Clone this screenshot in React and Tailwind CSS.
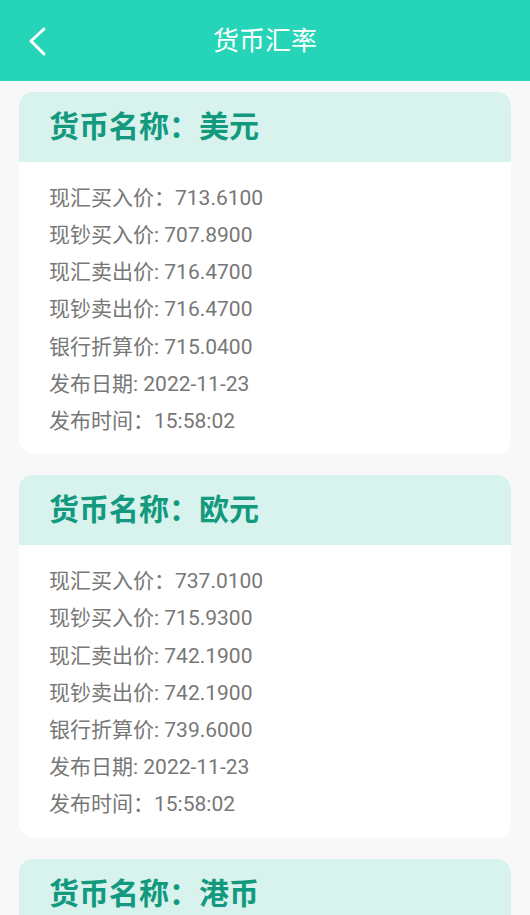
const rates = [
  {
    name: '美元',
    rows: [
      ['现汇买入价：', '713.6100'],
      ['现钞买入价:', ' 707.8900'],
      ['现汇卖出价:', ' 716.4700'],
      ['现钞卖出价:', ' 716.4700'],
      ['银行折算价:', ' 715.0400'],
      ['发布日期:', ' 2022-11-23'],
      ['发布时间：', '15:58:02'],
    ],
  },
  {
    name: '欧元',
    rows: [
      ['现汇买入价：', '737.0100'],
      ['现钞买入价:', ' 715.9300'],
      ['现汇卖出价:', ' 742.1900'],
      ['现钞卖出价:', ' 742.1900'],
      ['银行折算价:', ' 739.6000'],
      ['发布日期:', ' 2022-11-23'],
      ['发布时间：', '15:58:02'],
    ],
  },
  {
    name: '港币',
    rows: [
      ['现汇买入价：', '91.1700'],
      ['现钞买入价:', ' 90.4500'],
      ['现汇卖出价:', ' 91.5300'],
      ['现钞卖出价:', ' 91.5300'],
      ['银行折算价:', ' 91.3500'],
      ['发布日期:', ' 2022-11-23'],
      ['发布时间：', '15:58:02'],
    ],
  },
]

function RateCard({ name, rows }) {
  return (
    <div className="rounded-[14px] overflow-hidden bg-white">
      <div className="h-[70px] bg-[#d8f2ed] flex items-center pl-[30px]">
        <h2 className="text-[30px] font-semibold text-[#12997e] leading-none">货币名称：{name}</h2>
      </div>
      <div className="pl-[30px] pt-[18px] pb-[14px]">
        {rows.map(([k, v]) => (
          <p key={k} className="h-[37.2px] flex items-center text-[21px] text-[#777] whitespace-pre">
            {k}{v}
          </p>
        ))}
      </div>
    </div>
  )
}

export default function App() {
  return (
    <div className="min-h-screen bg-[#f8f8f8]" style={{ fontFamily: "Roboto, 'Noto Sans CJK SC', sans-serif" }}>
      {/* header */}
      <div className="h-[81px] bg-[#26d4b7] flex items-center relative">
        <svg className="absolute left-[26px] top-[24px]" width="24" height="34" viewBox="0 0 24 34" fill="none">
          <polyline points="18,5 5,17 18,30" stroke="white" strokeWidth="3" strokeLinecap="round" strokeLinejoin="round" />
        </svg>
        <h1 className="flex-1 text-center text-white text-[26px] leading-none">货币汇率</h1>
      </div>

      <div className="px-[19px] pt-[11px] flex flex-col gap-[21px] pb-6">
        {rates.map((r) => <RateCard key={r.name} {...r} />)}
      </div>
    </div>
  )
}
